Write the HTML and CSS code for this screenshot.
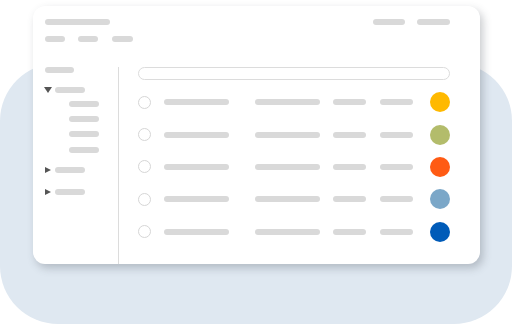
FILE: index.html
```html
<!DOCTYPE html>
<html lang="en">
<head>
    <meta charset="UTF-8">
    <meta name="viewport" content="width=device-width, initial-scale=1.0">
    <title>Table placeholder</title>
    <link rel="stylesheet" href="styles.css">
</head>
<body>
    <div class="stage">
        <div class="backdrop"></div>

        <div class="card">
            <!-- Cabecera -->
            <div class="header">
                <div class="header-left">
                    <span class="pill w65"></span>
                    <div class="tabs">
                        <span class="pill w20"></span>
                        <span class="pill w20"></span>
                        <span class="pill w21"></span>
                    </div>
                </div>
                <div class="header-right">
                    <span class="pill w32"></span>
                    <span class="pill w33"></span>
                </div>
            </div>

            <div class="body">
                <!-- Arbol lateral -->
                <div class="sidebar">
                    <span class="pill w29"></span>
                    <div class="tree-item open">
                        <span class="caret down"></span>
                        <span class="pill w30"></span>
                    </div>
                    <div class="children">
                        <span class="pill w30"></span>
                        <span class="pill w30"></span>
                        <span class="pill w30"></span>
                        <span class="pill w30"></span>
                    </div>
                    <div class="tree-item closed">
                        <span class="caret right"></span>
                        <span class="pill w30"></span>
                    </div>
                    <div class="tree-item closed">
                        <span class="caret right"></span>
                        <span class="pill w30"></span>
                    </div>
                </div>

                <!-- Lista principal -->
                <div class="main">
                    <div class="search"></div>
                    <div class="rows">
                        <div class="row">
                            <span class="radio"></span>
                            <span class="pill w65 c1"></span>
                            <span class="pill w65 c2"></span>
                            <span class="pill w33 c3"></span>
                            <span class="pill w33 c4"></span>
                            <span class="dot amber"></span>
                        </div>
                        <div class="row">
                            <span class="radio"></span>
                            <span class="pill w65 c1"></span>
                            <span class="pill w65 c2"></span>
                            <span class="pill w33 c3"></span>
                            <span class="pill w33 c4"></span>
                            <span class="dot olive"></span>
                        </div>
                        <div class="row">
                            <span class="radio"></span>
                            <span class="pill w65 c1"></span>
                            <span class="pill w65 c2"></span>
                            <span class="pill w33 c3"></span>
                            <span class="pill w33 c4"></span>
                            <span class="dot orange"></span>
                        </div>
                        <div class="row">
                            <span class="radio"></span>
                            <span class="pill w65 c1"></span>
                            <span class="pill w65 c2"></span>
                            <span class="pill w33 c3"></span>
                            <span class="pill w33 c4"></span>
                            <span class="dot sky"></span>
                        </div>
                        <div class="row">
                            <span class="radio"></span>
                            <span class="pill w65 c1"></span>
                            <span class="pill w65 c2"></span>
                            <span class="pill w33 c3"></span>
                            <span class="pill w33 c4"></span>
                            <span class="dot blue"></span>
                        </div>
                    </div>
                </div>
            </div>
        </div>
    </div>
</body>
</html>
```

FILE: styles.css
```css
body {
    margin: 0;
    width: 513px;
    height: 325px;
    overflow: hidden;
    background-color: #ffffff;
    font-family: "Liberation Sans", Arial, sans-serif;
}

/* Escenario: fondo azul y tarjeta superpuestos */
.stage {
    display: grid;
    width: 513px;
    height: 325px;
}

.backdrop, .card {
    grid-area: 1 / 1;
}

.backdrop {
    margin: 63px 1px 1px 0;
    background-color: #dfe8f1;
    border-radius: 58px;
}

.card {
    margin: 6px 0 0 33px;
    width: 447px;
    height: 258px;
    background-color: #ffffff;
    border-radius: 12px;
    box-shadow: 3px 4px 9px rgba(60, 70, 80, 0.28);
    display: flex;
    flex-direction: column;
}

/* Barras de marcador */
.pill {
    display: block;
    height: 6px;
    border-radius: 3px;
    background-color: #d9d9d9;
    flex-shrink: 0;
}

.w20 { width: 20px; }
.w21 { width: 21px; }
.w29 { width: 29px; }
.w30 { width: 30px; }
.w32 { width: 32px; }
.w33 { width: 33px; }
.w65 { width: 65px; }

/* Cabecera */
.header {
    display: flex;
    justify-content: space-between;
    padding: 13px 30px 0 12px;
    height: 48px;
}

.header-left {
    display: flex;
    flex-direction: column;
    gap: 11px;
}

.tabs {
    display: flex;
    gap: 14px;
}

.tabs .pill:nth-child(2) {
    margin-left: -1px;
}

.header-right {
    display: flex;
    gap: 12px;
}

/* Cuerpo */
.body {
    flex: 1;
    display: flex;
}

.sidebar {
    width: 86px;
    flex-shrink: 0;
    padding: 0 0 0 12px;
    box-sizing: border-box;
    border-right: 1px solid #dcdcdc;
}

.tree-item {
    display: flex;
    align-items: center;
    margin-top: 14px;
}

.tree-item.closed {
    margin-top: 16px;
}

.children + .tree-item.closed {
    margin-top: 14px;
}

.caret {
    width: 0;
    height: 0;
    margin-right: 3px;
}

.caret.down {
    margin-left: -1px;
    border-left: 4px solid transparent;
    border-right: 4px solid transparent;
    border-top: 6px solid #555555;
    margin-right: 3px;
}

.caret.right {
    border-top: 3.5px solid transparent;
    border-bottom: 3.5px solid transparent;
    border-left: 6px solid #555555;
    margin-right: 4px;
}

.children {
    display: flex;
    flex-direction: column;
    gap: 9px;
    padding-left: 24px;
    margin-top: 8px;
}

.children .pill:nth-child(4) {
    margin-top: 1px;
}

.main {
    flex: 1;
    padding: 0 31px 0 19px;
}

.search {
    height: 11px;
    border: 1px solid #dcdcdc;
    border-radius: 7px;
}

.rows {
    margin-top: 6px;
}

.row {
    display: flex;
    align-items: center;
    height: 32.4px;
}

.radio {
    width: 11px;
    height: 11px;
    border: 1px solid #d6d6d6;
    border-radius: 50%;
    flex-shrink: 0;
}

.c1 { margin-left: 13px; }
.c2 { margin-left: 26px; }
.c3 { margin-left: 13px; }
.c4 { margin-left: 14px; }

.dot {
    width: 20px;
    height: 20px;
    border-radius: 50%;
    margin-left: 17px;
    flex-shrink: 0;
}

.amber { background-color: #ffb900; }
.olive { background-color: #b3bc6b; }
.orange { background-color: #ff5b14; }
.sky { background-color: #7ba7c8; }
.blue { background-color: #005bb8; }
```
